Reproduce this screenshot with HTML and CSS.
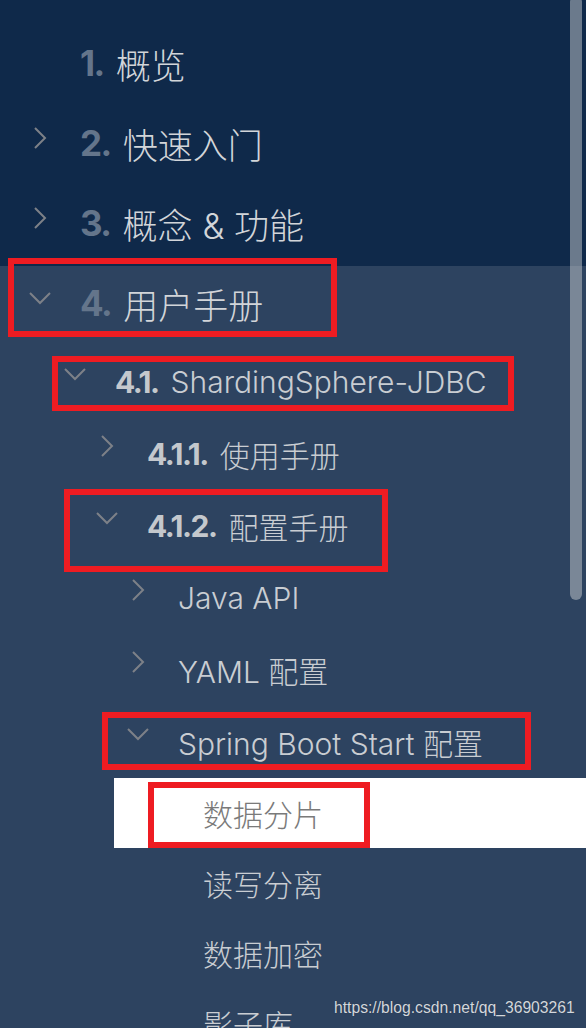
FILE: index.html
```html
<!DOCTYPE html>
<html lang="zh-CN">
<head>
<meta charset="utf-8">
<title>ShardingSphere 文档导航</title>
<link rel="stylesheet" href="styles.css">
</head>
<body>
<div class="page">
  <nav class="sidebar">
    <ul class="menu top-menu">
      <li class="item">
        <a class="row l1"><span class="chev-space"></span><b class="num top">1.</b><span class="label">概览</span></a>
      </li>
      <li class="item">
        <a class="row l1"><svg class="chev" viewBox="0 0 24 24"><path d="M7 2 L17 12 L7 22"/></svg><b class="num top">2.</b><span class="label">快速入门</span></a>
      </li>
      <li class="item">
        <a class="row l1"><svg class="chev" viewBox="0 0 24 24"><path d="M7 2 L17 12 L7 22"/></svg><b class="num top">3.</b><span class="label">概念 &amp; 功能</span></a>
      </li>
      <li class="item open">
        <a class="row l1"><svg class="chev" viewBox="0 0 24 24"><path d="M2 7 L12 17 L22 7"/></svg><b class="num top">4.</b><span class="label">用户手册</span></a>
        <ul class="menu">
          <li class="item">
            <a class="row l2 sub"><svg class="chev" viewBox="0 0 24 24"><path d="M2 7 L12 17 L22 7"/></svg><b class="num">4.1.</b><span class="label">ShardingSphere-JDBC</span></a>
            <ul class="menu">
              <li class="item">
                <a class="row l3 sub"><svg class="chev" viewBox="0 0 24 24"><path d="M7 2 L17 12 L7 22"/></svg><b class="num">4.1.1.</b><span class="label">使用手册</span></a>
              </li>
              <li class="item">
                <a class="row l3 sub"><svg class="chev" viewBox="0 0 24 24"><path d="M2 7 L12 17 L22 7"/></svg><b class="num">4.1.2.</b><span class="label">配置手册</span></a>
                <ul class="menu">
                  <li class="item">
                    <a class="row l4"><svg class="chev" viewBox="0 0 24 24"><path d="M7 2 L17 12 L7 22"/></svg><span class="label">Java API</span></a>
                  </li>
                  <li class="item">
                    <a class="row l4"><svg class="chev" viewBox="0 0 24 24"><path d="M7 2 L17 12 L7 22"/></svg><span class="label">YAML 配置</span></a>
                  </li>
                  <li class="item">
                    <a class="row l4"><svg class="chev" viewBox="0 0 24 24"><path d="M2 7 L12 17 L22 7"/></svg><span class="label">Spring Boot Start 配置</span></a>
                    <ul class="menu">
                      <li class="item"><a class="row l5 active"><span class="label">数据分片</span></a></li>
                      <li class="item"><a class="row l5"><span class="label">读写分离</span></a></li>
                      <li class="item"><a class="row l5"><span class="label">数据加密</span></a></li>
                      <li class="item"><a class="row l5"><span class="label">影子库</span></a></li>
                    </ul>
                  </li>
                </ul>
              </li>
            </ul>
          </li>
        </ul>
      </li>
    </ul>
  </nav>

  <div class="scrollbar"></div>

  <div class="mark mark-1"></div>
  <div class="mark mark-2"></div>
  <div class="mark mark-3"></div>
  <div class="mark mark-4"></div>
  <div class="mark mark-5"></div>

  <div class="watermark">https://blog.csdn.net/qq_36903261</div>
</div>
</body>
</html>
```

FILE: styles.css
```css
html, body {
  margin: 0;
  padding: 0;
}

body {
  background: #0f294a;
  font-family: Inter, "Noto Sans CJK SC", sans-serif;
  font-weight: 300;
  overflow: hidden;
}

.page {
  position: relative;
  width: 586px;
  height: 1028px;
  overflow: hidden;
}

.sidebar {
  padding-top: 26px;
}

.menu {
  list-style: none;
  margin: 0;
  padding: 0;
}

.item.open {
  background: #2d4360;
}

.row {
  display: flex;
  align-items: center;
  box-sizing: border-box;
  height: 72px;
  font-size: 30px;
  color: #c9cdd2;
  white-space: nowrap;
  text-decoration: none;
}

.l1 {
  height: 80px;
  font-size: 35px;
  padding-left: 28px;
  padding-bottom: 6px;
  color: #d2d5d9;
}

.l2 {
  padding-left: 63px;
}

.l3 {
  padding-left: 95px;
}

.l4 {
  padding-left: 126px;
}

.l5 {
  height: 70px;
  margin-left: 114px;
  padding-left: 89px;
}

.l5.active {
  background: #ffffff;
  color: #7a7a7a;
}

.chev,
.chev-space {
  flex: none;
  width: 24px;
  height: 24px;
  margin-right: 28px;
  margin-bottom: 16px;
}

.l1 .chev,
.l1 .chev-space {
  margin-bottom: 10px;
}

.chev path {
  fill: none;
  stroke: #7d8188;
  stroke-width: 2;
}

.num {
  font-weight: 700;
  letter-spacing: -1.5px;
  margin-right: 12px;
  color: #c4c8cd;
}

.num.top {
  color: #64758b;
}

.scrollbar {
  position: absolute;
  left: 570px;
  top: -4px;
  width: 12px;
  height: 604px;
  border-radius: 6px;
  background: rgba(199, 203, 206, 0.5);
}

.mark {
  position: absolute;
  border: 6px solid #ee1c22;
  box-sizing: border-box;
}

.mark-1 { left: 8px;   top: 258px; width: 329px; height: 79px; }
.mark-2 { left: 52px;  top: 356px; width: 462px; height: 55px; }
.mark-3 { left: 64px;  top: 489px; width: 324px; height: 83px; }
.mark-4 { left: 102px; top: 712px; width: 429px; height: 58px; }
.mark-5 { left: 148px; top: 782px; width: 222px; height: 66px; }

.watermark {
  position: absolute;
  left: 334px;
  top: 999px;
  font-family: "Liberation Sans", Arial, sans-serif;
  font-weight: 400;
  font-size: 15.7px;
  color: #d3d7dc;
  text-shadow: 0 0 1px rgba(0, 0, 0, 0.3);
}
```
